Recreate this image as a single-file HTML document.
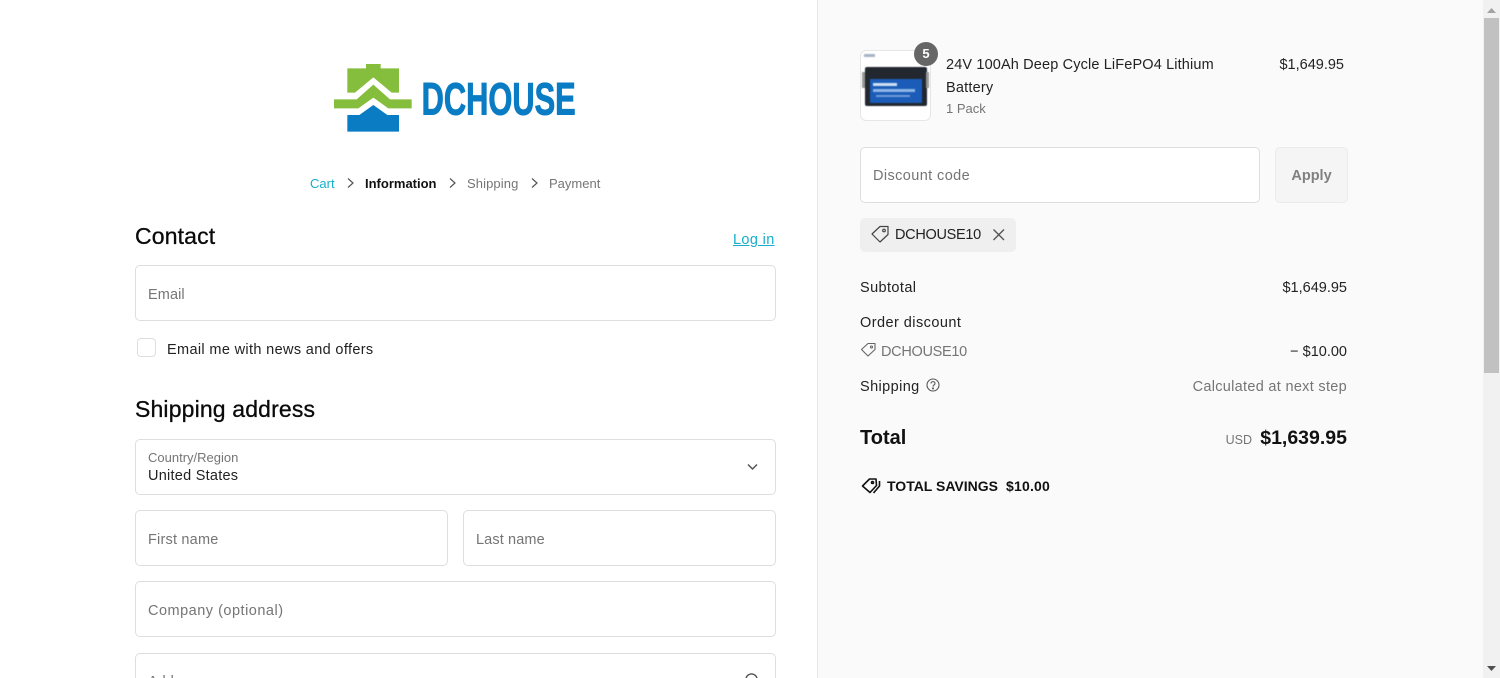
<!DOCTYPE html>
<html><head><meta charset="utf-8"><style>
html,body{margin:0;padding:0;width:1500px;height:678px;overflow:hidden;background:#fff}
body{position:relative;font-family:"Liberation Sans","Noto Sans CJK JP",sans-serif;font-size:14.5px;color:#333}
.t{position:absolute;white-space:nowrap;line-height:20px;height:20px}
.r{text-align:right}
.g{color:#757575}
.k{color:#111}
.box{position:absolute;box-sizing:border-box;border:1px solid #dedede;border-radius:5px;background:#fff}
h2{position:absolute;margin:0;font-weight:400;font-size:23px;line-height:30px;color:#0a0a0a;white-space:nowrap;-webkit-text-stroke:.3px #0a0a0a;letter-spacing:.15px}
svg{position:absolute;overflow:visible}
</style></head><body>
<div style="position:absolute;left:817px;top:0;width:666px;height:678px;background:#fafafa;border-left:1px solid #e6e6e6;box-sizing:border-box"></div>
<div style="position:absolute;left:1483px;top:0;width:17px;height:678px;background:#f1f1f1"></div>
<div style="position:absolute;left:1484px;top:18px;width:15px;height:355px;background:#c1c1c1"></div>
<svg style="left:1483px;top:0" width="17" height="678"><path d="M8.5 8L13 13H4Z" fill="#a3a3a3"/><path d="M4 666H13L8.5 671Z" fill="#505050"/></svg>

<svg style="left:320px;top:50px;filter:blur(.3px)" width="270" height="90" viewBox="0 0 810 270">
<path d="M138 42H182V55H237V128H215L160 82L105 128H82V55H138Z" fill="#85bd3c"/>
<path d="M42 148H110L160 104L210 148H275V175H205L160 143L115 175H42Z" fill="#85bd3c"/>
<path d="M82 195H118L160 165L202 195H237V245H82Z" fill="#0a7cc4"/>
<text x="305" y="193" font-family="Liberation Sans" font-weight="700" font-size="136" fill="#0a7cc4" stroke="#0a7cc4" stroke-width="3" textLength="462" lengthAdjust="spacingAndGlyphs">DCHOUSE</text>
</svg>

<div class="t" style="left:310px;top:174px;font-size:13px;color:#16aecb">Cart</div>
<svg style="left:346px;top:177px" width="10" height="12" fill="none" stroke="#555" stroke-width="1.2"><path d="M2 1.5L7 6L2 10.5"/></svg>
<div class="t" style="left:365px;top:174px;font-size:13px;color:#111;font-weight:700;letter-spacing:0">Information</div>
<svg style="left:448px;top:177px" width="10" height="12" fill="none" stroke="#555" stroke-width="1.2"><path d="M2 1.5L7 6L2 10.5"/></svg>
<div class="t g" style="left:467px;top:174px;font-size:13px;letter-spacing:.1px">Shipping</div>
<svg style="left:530px;top:177px" width="10" height="12" fill="none" stroke="#555" stroke-width="1.2"><path d="M2 1.5L7 6L2 10.5"/></svg>
<div class="t g" style="left:549px;top:174px;font-size:13px">Payment</div>

<h2 style="left:135px;top:221px">Contact</h2>
<div class="t" style="left:733px;top:230px;color:#16aecb;text-decoration:underline;letter-spacing:.35px">Log in</div>
<div class="box" style="left:135px;top:265px;width:641px;height:56px"></div>
<div class="t g" style="left:148px;top:285px;letter-spacing:.1px">Email</div>
<div class="box" style="left:137px;top:338px;width:19px;height:19px;border-radius:4px"></div>
<div class="t" style="left:167px;top:340px;color:#222;letter-spacing:.35px">Email me with news and offers</div>

<h2 style="left:135px;top:394px">Shipping address</h2>
<div class="box" style="left:135px;top:439px;width:641px;height:56px"></div>
<div class="t g" style="left:148px;top:448px;font-size:13px">Country/Region</div>
<div class="t" style="left:148px;top:466px;color:#222;letter-spacing:.25px">United States</div>
<svg style="left:746px;top:462px" width="13" height="10" fill="none" stroke="#555" stroke-width="1.5"><path d="M2 2.5L6.5 7L11 2.5"/></svg>
<div class="box" style="left:135px;top:510px;width:313px;height:56px"></div>
<div class="t g" style="left:148px;top:530px;letter-spacing:.2px">First name</div>
<div class="box" style="left:463px;top:510px;width:313px;height:56px"></div>
<div class="t g" style="left:476px;top:530px;letter-spacing:.12px">Last name</div>
<div class="box" style="left:135px;top:581px;width:641px;height:56px"></div>
<div class="t g" style="left:148px;top:601px;letter-spacing:.5px">Company (optional)</div>
<div class="box" style="left:135px;top:653px;width:641px;height:56px"></div>
<div class="t g" style="left:148px;top:672px">Address</div>
<svg style="left:744px;top:672px" width="16" height="16" fill="none" stroke="#555" stroke-width="1.4"><circle cx="7.5" cy="7.5" r="5.6"/></svg>

<div class="box" style="left:860px;top:50px;width:71px;height:71px;border-radius:6px;border-color:#e6e6e6"></div>
<svg style="left:860px;top:50px;filter:blur(.6px)" width="72" height="72">
<rect x="4" y="4" width="11" height="3" fill="#a6b4c6"/>
<rect x="5" y="17" width="62" height="39" rx="2" fill="#23272f"/>
<rect x="2" y="22" width="3" height="16" fill="#999"/>
<rect x="66" y="22" width="3" height="16" fill="#999"/>
<rect x="10" y="29" width="52" height="24" fill="#1a5cb8"/>
<rect x="13" y="33" width="24" height="3" fill="#cfe0f5"/>
<rect x="13" y="39" width="42" height="3" fill="#8fb6e6"/>
<rect x="16" y="45" width="34" height="2" fill="#6d9bd8"/>
</svg>
<svg style="left:914px;top:42px" width="24" height="24"><circle cx="12" cy="12" r="12" fill="#666"/></svg>
<div class="t" style="left:914px;top:44px;width:24px;text-align:center;color:#fff;font-size:13px;font-weight:700">5</div>
<div class="t" style="left:946px;top:55px;color:#222;letter-spacing:.14px">24V 100Ah Deep Cycle LiFePO4 Lithium</div>
<div class="t" style="left:946px;top:78px;color:#222;letter-spacing:.2px">Battery</div>
<div class="t g" style="left:946px;top:99px;font-size:13px">1 Pack</div>
<div class="t r" style="left:1244px;top:55px;width:100px;color:#222">$1,649.95</div>

<div class="box" style="left:860px;top:147px;width:400px;height:56px"></div>
<div class="t g" style="left:873px;top:166px;letter-spacing:.4px">Discount code</div>
<div class="box" style="left:1275px;top:147px;width:73px;height:56px;background:#f5f5f5;border-color:#ebebeb"></div>
<div class="t" style="left:1275px;top:166px;width:73px;text-align:center;color:#808080;font-weight:700">Apply</div>

<div style="position:absolute;left:860px;top:218px;width:156px;height:34px;background:#efefef;border-radius:5px"></div>
<svg style="left:870px;top:224px" width="20" height="20" fill="none" stroke="#444" stroke-width="1.2"><path d="M2 10L10 2.5H18V10.5L10 18Z" stroke-linejoin="round"/><circle cx="14" cy="6.5" r="1.3"/></svg>
<div class="t" style="left:895px;top:225px;color:#222;letter-spacing:-.3px">DCHOUSE10</div>
<svg style="left:992px;top:228px" width="14" height="14" fill="none" stroke="#555" stroke-width="1.4"><path d="M1.5 1.5L12 12M12 1.5L1.5 12"/></svg>

<div class="t" style="left:860px;top:278px;color:#222;letter-spacing:.4px">Subtotal</div>
<div class="t r" style="left:1247px;top:278px;width:100px;color:#222">$1,649.95</div>
<div class="t" style="left:860px;top:313px;color:#222;letter-spacing:.45px">Order discount</div>
<svg style="left:860px;top:342px" width="16" height="16" fill="none" stroke="#666" stroke-width="1.1"><path d="M1.5 7.5L8 1.5H15V7.5L8 14Z" stroke-linejoin="round"/><circle cx="11.5" cy="5" r="1"/></svg>
<div class="t g" style="left:881px;top:342px;letter-spacing:-.3px">DCHOUSE10</div>
<div class="t r" style="left:1247px;top:342px;width:100px;color:#222">− $10.00</div>
<div class="t" style="left:860px;top:377px;color:#222;letter-spacing:.4px">Shipping</div>
<svg style="left:926px;top:378px" width="14" height="14" fill="none" stroke="#555" stroke-width="1.1"><circle cx="7" cy="7" r="6"/><path d="M5 5.5C5 3 9 3 9 5.5C9 7 7 7 7 8.6"/><circle cx="7" cy="10.4" r=".5"/></svg>
<div class="t r g" style="left:1147px;top:377px;width:200px;letter-spacing:.3px">Calculated at next step</div>

<div class="t k" style="left:860px;top:428px;font-size:20px;font-weight:700">Total</div>
<div class="t r g" style="left:1200px;top:430px;width:52px;font-size:12.5px">USD</div>
<div class="t r k" style="left:1247px;top:428px;width:100px;font-size:19.5px;font-weight:700">$1,639.95</div>

<svg style="left:861px;top:477px" width="20" height="18" fill="none" stroke="#111" stroke-width="1.6"><path d="M1.5 9L8.5 2H15L15.5 8.5L9 15.5Z" stroke-linejoin="round"/><path d="M18.5 4L18.5 9L12.5 16"/><circle cx="11.5" cy="5.5" r="1"/></svg>
<div class="t" style="left:887px;top:476px;color:#111;font-weight:700;font-size:14px;letter-spacing:0">TOTAL SAVINGS</div>
<div class="t" style="left:1006px;top:476px;color:#111;font-weight:700;font-size:14px;letter-spacing:.2px">$10.00</div>
</body></html>
